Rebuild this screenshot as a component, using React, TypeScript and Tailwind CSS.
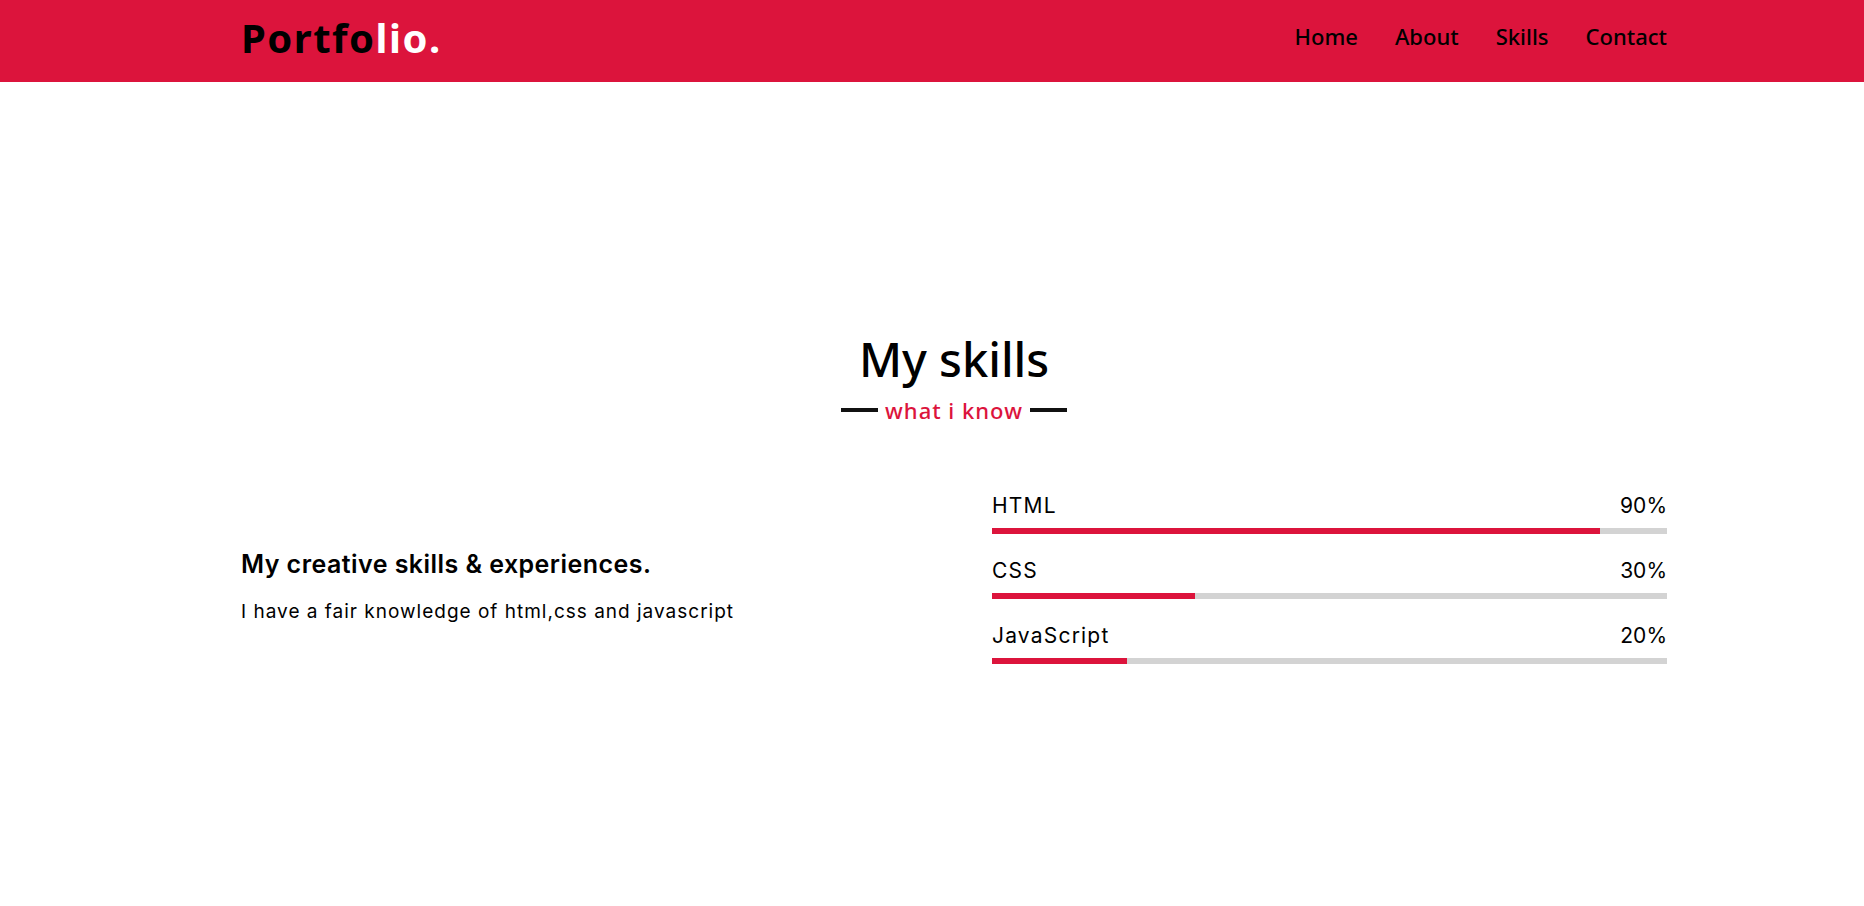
const skills = [
  { name: "HTML", percent: 90 },
  { name: "CSS", percent: 30 },
  { name: "JavaScript", percent: 20 },
]

const navLinks = ["Home", "About", "Skills", "Contact"]

function Navbar() {
  return (
    <nav className="h-[82px] bg-[#dc143c] font-['Noto_Sans',sans-serif]">
      <div className="ml-[241px] w-[1426px] h-full flex items-center justify-between">
        <a href="#" className="mb-[6px] text-[40px] font-bold leading-none text-black tracking-[1.5px]">
          Portfo<span className="text-white">lio.</span>
        </a>
        <ul className="flex items-center gap-[37px] pb-[10px]">
          {navLinks.map((link) => (
            <li key={link}>
              <a href="#" className="text-[22px] font-medium text-black">
                {link}
              </a>
            </li>
          ))}
        </ul>
      </div>
    </nav>
  )
}

function SkillBar({ name, percent }: { name: string; percent: number }) {
  return (
    <div>
      <div className="flex justify-between items-end text-[21px] leading-none text-black">
        <span className="tracking-[1.2px]">{name}</span>
        <span>{percent}%</span>
      </div>
      <div className="mt-[12px] h-[6px] w-full bg-[#d3d3d3]">
        <div className="h-full bg-[#dc143c]" style={{ width: `${percent}%` }} />
      </div>
    </div>
  )
}

export default function App() {
  return (
    <div className="min-h-screen bg-white text-black">
      <Navbar />
      <section className="pt-[254px] pb-[200px]">
        <div className="ml-[241px] w-[1426px]">
          <div className="flex flex-col items-center font-['Noto_Sans',sans-serif]">
            <h2 className="text-[47px] leading-none font-medium">My skills</h2>
            <div className="mt-[16px] flex items-center gap-[7px]">
              <span className="w-[37px] h-[4px] bg-[#111]" />
              <span className="text-[22px] leading-none font-medium tracking-[1px] text-[#dc143c]">what i know</span>
              <span className="w-[37px] h-[4px] bg-[#111]" />
            </div>
          </div>
          <div className="mt-[74px] flex items-start justify-between font-['Inter',sans-serif]">
            <div className="mt-[57px]">
              <h3 className="text-[25px] font-semibold leading-none tracking-[0.45px]">My creative skills &amp; experiences.</h3>
              <p className="mt-[25px] text-[19px] leading-none tracking-[1px]">I have a fair knowledge of html,css and javascript</p>
            </div>
            <div className="w-[675px] flex flex-col gap-[26px]">
              {skills.map((s) => (
                <SkillBar key={s.name} name={s.name} percent={s.percent} />
              ))}
            </div>
          </div>
        </div>
      </section>
    </div>
  )
}
